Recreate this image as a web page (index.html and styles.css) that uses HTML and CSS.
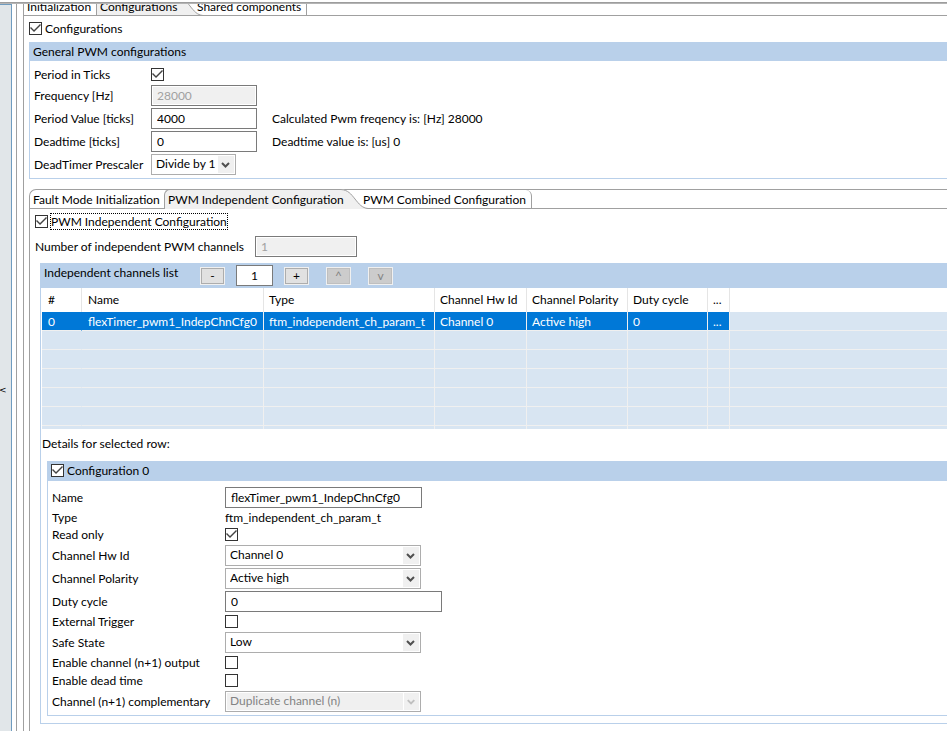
FILE: index.html
```html
<!DOCTYPE html>
<html lang="en">
<head>
<meta charset="utf-8">
<title>PWM configuration</title>
<link rel="stylesheet" href="styles.css">
</head>
<body>
<div class="window">
  <aside class="rail"><button class="rail-toggle" type="button" aria-label="Collapse">&lt;</button></aside>
  <main class="editor">
    <nav class="tabs tabs-top">
      <a class="tab tab-init" href="#">Initialization</a>
      <a class="tab tab-active tab-conf" href="#"><span>Configurations</span><svg class="curve" viewBox="0 0 29 20"><path class="curve-fill" d="M0 0H2C9 1 12 5 16 10C20 15 23 19 29 19.500V20H0Z"/><path class="curve-line" d="M0 .5H2C9 1 12 5 16 10C20 15 23 19 29 19.500"/></svg></a>
      <a class="tab tab-last tab-shared" href="#">Shared components</a>
    </nav>
    <label class="check-line"><input type="checkbox" checked><span>Configurations</span></label>

    <section class="panel general">
      <h2 class="panel-title">General PWM configurations</h2>
      <div class="grid general-grid">
        <label for="ticks">Period in Ticks</label><input id="ticks" type="checkbox" checked><span></span>
        <label for="freq">Frequency [Hz]</label><input id="freq" class="field" type="text" value="28000" disabled><span></span>
        <label for="period">Period Value [ticks]</label><input id="period" class="field" type="text" value="4000"><span>Calculated Pwm freqency is: [Hz] 28000</span>
        <label for="dead">Deadtime [ticks]</label><input id="dead" class="field" type="text" value="0"><span>Deadtime value is: [us] 0</span>
        <label for="presc">DeadTimer Prescaler</label><span class="combo combo-small"><select id="presc"><option>Divide by 1</option></select><svg class="arrow" viewBox="0 0 16 17"><path d="M4 7L7.500 10.500L11 7"/></svg></span><span></span>
      </div>
    </section>

    <section class="folder">
      <nav class="tabs tabs-inner">
        <a class="tab tab-fault" href="#">Fault Mode Initialization</a>
        <a class="tab tab-active tab-indep" href="#"><span>PWM Independent Configuration</span><svg class="curve" viewBox="0 0 29 20"><path class="curve-fill" d="M0 0H2C9 1 12 5 16 10C20 15 23 19 29 19.500V20H0Z"/><path class="curve-line" d="M0 .5H2C9 1 12 5 16 10C20 15 23 19 29 19.500"/></svg></a>
        <a class="tab tab-last tab-comb" href="#">PWM Combined Configuration</a>
      </nav>
      <div class="folder-body">
        <label class="check-line"><input type="checkbox" checked><span class="focused">PWM Independent Configuration</span></label>
        <div class="count-line"><label for="count">Number of independent PWM channels</label><input id="count" class="field" type="text" value="1" disabled></div>

        <section class="panel list">
          <header class="list-head">
            <h2 class="list-title">Independent channels list</h2>
            <button class="tool" type="button">-</button>
            <input class="field list-size" type="text" value="1" aria-label="Channel count">
            <button class="tool" type="button">+</button>
            <button class="tool tool-move" type="button" disabled>^</button>
            <button class="tool tool-move" type="button" disabled>v</button>
          </header>
          <table class="channels">
            <colgroup><col class="c-num"><col class="c-name"><col class="c-type"><col class="c-hw"><col class="c-pol"><col class="c-duty"><col class="c-more"><col></colgroup>
            <thead><tr><th>#</th><th>Name</th><th>Type</th><th>Channel Hw Id</th><th>Channel Polarity</th><th>Duty cycle</th><th>...</th><th></th></tr></thead>
            <tbody>
              <tr class="selected"><td>0</td><td>flexTimer_pwm1_IndepChnCfg0</td><td>ftm_independent_ch_param_t</td><td>Channel 0</td><td>Active high</td><td>0</td><td>...</td><td></td></tr>
              <tr><td></td><td></td><td></td><td></td><td></td><td></td><td></td><td></td></tr>
              <tr><td></td><td></td><td></td><td></td><td></td><td></td><td></td><td></td></tr>
              <tr><td></td><td></td><td></td><td></td><td></td><td></td><td></td><td></td></tr>
              <tr><td></td><td></td><td></td><td></td><td></td><td></td><td></td><td></td></tr>
              <tr><td></td><td></td><td></td><td></td><td></td><td></td><td></td><td></td></tr>
              <tr class="partial"><td></td><td></td><td></td><td></td><td></td><td></td><td></td><td></td></tr>
            </tbody>
          </table>
          <p class="details-label">Details for selected row:</p>

          <section class="panel details">
            <label class="check-line details-title"><input type="checkbox" checked><span>Configuration 0</span></label>
            <div class="grid details-grid">
              <label for="name">Name</label><input id="name" class="field name-field" type="text" value="flexTimer_pwm1_IndepChnCfg0">
              <span class="plain">Type</span><span class="plain">ftm_independent_ch_param_t</span>
              <label for="ro">Read only</label><input id="ro" type="checkbox" checked>
              <label for="hw">Channel Hw Id</label><span class="combo"><select id="hw"><option>Channel 0</option></select><svg class="arrow" viewBox="0 0 16 17"><path d="M4 7L7.500 10.500L11 7"/></svg></span>
              <label for="pol">Channel Polarity</label><span class="combo"><select id="pol"><option>Active high</option></select><svg class="arrow" viewBox="0 0 16 17"><path d="M4 7L7.500 10.500L11 7"/></svg></span>
              <label for="duty">Duty cycle</label><input id="duty" class="field duty-field" type="text" value="0">
              <label for="ext">External Trigger</label><input id="ext" type="checkbox">
              <label for="safe">Safe State</label><span class="combo"><select id="safe"><option>Low</option></select><svg class="arrow" viewBox="0 0 16 17"><path d="M4 7L7.500 10.500L11 7"/></svg></span>
              <label for="out">Enable channel (n+1) output</label><input id="out" type="checkbox">
              <label for="edt">Enable dead time</label><input id="edt" type="checkbox">
              <label for="comp">Channel (n+1) complementary</label><span class="combo combo-off"><select id="comp" disabled><option>Duplicate channel (n)</option></select><svg class="arrow" viewBox="0 0 16 17"><path d="M4 7L7.500 10.500L11 7"/></svg></span>
            </div>
          </section>
        </section>
      </div>
    </section>
  </main>
</div>
</body>
</html>
```
FILE: styles.css
```css
* { box-sizing: border-box; }

body {
  margin: 0;
  background: #fff;
  color: #000;
  font: 12px/16px Lato, "Open Sans", sans-serif;
  overflow: hidden;
}

input, select, button { font: inherit; color: inherit; margin: 0; }
h2, p { margin: 0; font: inherit; }

.window {
  display: flex;
  min-height: 100vh;
  padding-top: 2px;
  background: linear-gradient(#fff 2px, #9d9d9d 2px, #9d9d9d 3px, #b4b4b4 3px, #b4b4b4 4px, #fff 4px);
}

/* left rail */
.rail {
  display: flex;
  align-items: center;
  width: 12px;
  margin-top: 2px;
  padding-top: 44px;
  background: #e1e6e9;
  border-top: 1px solid #6f9cc0;
  border-right: 1px solid #6f9cc0;
}
.rail-toggle {
  margin-left: -1px;
  padding: 0;
  border: 0;
  background: none;
  font: 9px/12px "DejaVu Sans", sans-serif;
}

.editor {
  flex: 1;
  min-width: 0;
  margin: 2px 0 0 4px;
  border-left: 1px solid #a0a0a0;
  padding-left: 6px;
  white-space: nowrap;
}
.editor > * { border-left: 1px solid #a0a0a0; }

/* tabs */
.tabs {
  display: flex;
  height: 20px;
  border-top: 1px solid #a0a0a0;
  border-bottom: 1px solid #a0a0a0;
  line-height: 20px;
}
.tab {
  flex: none;
  height: 18px;
  padding-left: 4px;
  color: #000;
  text-decoration: none;
}
.tab-active {
  display: flex;
  justify-content: space-between;
  height: 20px;
  margin: -1px 0;
  background: linear-gradient(#f0f0f0, #f0f0f0) no-repeat 0 0 / calc(100% - 28px) 100%;
  border-top: 1px solid #a0a0a0;
  border-left: 1px solid #a0a0a0;
  border-top-left-radius: 6px;
}
.curve { width: 29px; height: 20px; margin: -1px 0 0 -10px; flex: none; }
.curve-fill { fill: #f0f0f0; }
.curve-line { fill: none; stroke: #a0a0a0; }
.tab-active span { position: relative; z-index: 1; }
.tab-last {
  margin-left: -5px;
  padding-left: 0;
  border-right: 1px solid #a0a0a0;
  border-top-right-radius: 6px;
}
.tabs-top {
  height: 12px;
  border-top: 0;
  align-items: flex-end;
  overflow: clip;
}
.tabs-top .tab-active { margin-bottom: -1px; }
.tab-init { width: 72px; padding-left: 3px; }
.tab-conf { width: 107px; padding-left: 3px; }
.tab-shared { width: 110px; margin-left: -6px; }
.tab-fault { width: 134px; padding-left: 3px; }
.tab-indep { width: 204px; padding-left: 3px; }
.tab-comb { width: 169px; }

/* check boxes */
.check-line { display: flex; align-items: center; gap: 2px; }
.editor > .check-line { padding: 5px 0 6px 5px; }
.check-line span { padding: 0 1px; line-height: 15px; }
.check-line .focused { margin-left: 1px; padding: 0; outline: 1px dotted #000; }
input[type="checkbox"] {
  appearance: none;
  flex: none;
  width: 13px;
  height: 13px;
  border: 1px solid #333;
  background: #fff;
}
input[type="checkbox"]:checked::before {
  content: "";
  display: block;
  width: 11px;
  height: 11px;
  background: #444;
  clip-path: polygon(0 5px, 1px 4px, 4px 7px, 10px 1px, 11px 2px, 4px 9px);
}

/* fields */
.field {
  width: 106px;
  height: 21px;
  padding: 0 5px;
  border: 1px solid #7a7a7a;
  background: #fff;
}
.field:disabled {
  color: #a0a0a0;
  background: #f0f0f0;
  box-shadow: inset 0 0 0 1px #fff;
}
.combo { position: relative; display: flex; width: 196px; height: 21px; }
.combo-small { width: 85px; }
.combo select {
  appearance: none;
  width: 100%;
  padding: 0 20px 2px 4px;
  border: 1px solid #adadad;
  border-radius: 0;
  background: #fff;
}
.arrow {
  position: absolute;
  top: 2px;
  right: 2px;
  width: 16px;
  height: 17px;
  background: #f0f0f0;
  pointer-events: none;
}
.arrow path { fill: none; stroke: #505050; stroke-width: 2; }
.combo-off select { color: #838383; opacity: 1; background: #f0f0f0; box-shadow: inset 0 0 0 1px #fff; }
.combo-off .arrow { border-left: 1px solid #fff; }
.combo-off .arrow path { stroke: #bfbfbf; }

/* panels */
.panel { border-left: 1px solid #b9d0ea; border-bottom: 1px solid #b9d0ea; }
.panel-title { padding: 0 4px; line-height: 19px; background: #b9d0ea; }
.grid { display: grid; align-items: center; justify-items: start; row-gap: 2px; }
.editor > .general { padding-left: 5px; border-left-color: #a0a0a0; border-bottom: 0; }
.general-grid {
  grid-template-columns: 117px 106px 1fr;
  column-gap: 0;
  grid-template-rows: 17px;
  padding: 5px 0 3px 4px;
  border-left: 1px solid #b9d0ea;
  border-bottom: 1px solid #b9d0ea;
}
.general-grid > span:nth-child(3n) { padding-left: 15px; }

/* inner folder */
.folder { padding: 10px 0 0 5px; }
.tabs-inner { border-left: 1px solid #a0a0a0; border-top-left-radius: 7px; }
.folder-body { padding: 5px 0 7px 5px; border-left: 1px solid #a0a0a0; }
.count-line { display: flex; align-items: center; gap: 10px; margin-top: 7px; }
.count-line label { width: 210px; }
.count-line .field { width: 102px; }

/* channels list */
.list { margin: 6px 0 0 5px; padding-bottom: 7px; }
.list-head { display: flex; align-items: center; height: 25px; padding-left: 3px; background: #b9d0ea; }
.list-title { width: 156px; padding-bottom: 5px; }
.tool {
  width: 25px;
  height: 18px;
  margin-right: 11px;
  padding: 0;
  border: 1px solid #f0f0f0;
  background: #e1e1e1;
  box-shadow: inset 0 0 0 1px #adadad;
  line-height: 14px;
}
.tool:disabled { color: #838383; background: #ccc; box-shadow: inset 0 0 0 1px #bfbfbf; }
.list-size { width: 37px; margin-right: 11px; text-align: center; }
.list-size + .tool, .tool-move { margin-right: 17px; }

.channels {
  width: calc(100% - 1px);
  margin-left: 1px;
  table-layout: fixed;
  border-collapse: separate;
  border-spacing: 0;
}
.c-num { width: 40px; }
.c-name { width: 182px; }
.c-type { width: 171px; }
.c-hw { width: 92px; }
.c-pol { width: 101px; }
.c-duty { width: 80px; }
.c-more { width: 22px; }
.channels th, .channels td { padding: 0 5px; font-weight: normal; text-align: left; overflow: hidden; }
.channels th { height: 24px; border-right: 1px solid #e5e5e5; }
.channels td { height: 19px; background: #d8e5f2; border-right: 1px solid #f0f0f0; border-bottom: 1px solid #f0f0f0; }
.channels tr > :first-child { padding-left: 6px; }
.channels tr > :nth-child(2) { padding: 0 0 0 6px; }
.channels tr > :last-child { border-right: 0; }
.channels td:first-child { border-right-color: #d8e5f2; }
.channels .selected td { padding-top: 2px; }
.selected td:not(:last-child) { color: #fff; background: #0078d7; }
.selected td:first-child { border-right-color: #0078d7; }
.channels .partial td { height: 3px; border-bottom: 0; }

.details-label { padding: 7px 0 9px 1px; }
.details { margin-left: 6px; }
.details-title { height: 20px; padding: 0 0 1px 3px; background: #b9d0ea; }
.details-grid { grid-template-columns: 173px 1fr; padding: 6px 0 3px 4px; }
.details-grid input[type="checkbox"] { margin: 1px 0 2px; }
.details-grid label { padding-bottom: 1px; line-height: 15px; }
.plain { line-height: 15px; }
.name-field { width: 197px; }
.duty-field { width: 217px; }
```
